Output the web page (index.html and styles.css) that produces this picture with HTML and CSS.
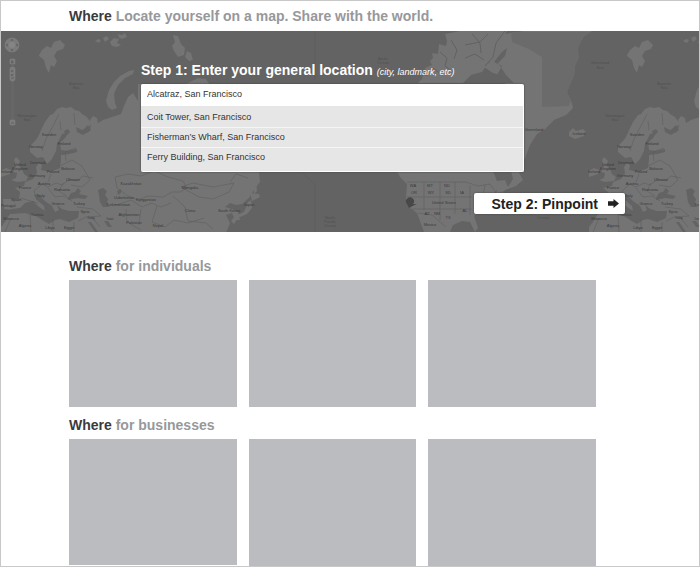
FILE: index.html
```html
<!DOCTYPE html>
<html lang="en">
<head>
<meta charset="utf-8">
<title>Where</title>
<meta name="viewport" content="width=device-width, initial-scale=1">
<link rel="stylesheet" href="styles.css">
</head>
<body>
<div class="page">
  <header class="masthead">
    <h1 class="title"><strong>Where</strong> Locate yourself on a map. Share with the world.</h1>
  </header>

  <section class="hero">
    <svg class="map" viewBox="1 31 698 201" preserveAspectRatio="xMidYMin slice" aria-hidden="true">
      <defs>
        <g id="old-world">
          <g class="land">
            <path d="M39 55l3-5 5-4 4 2 3-6 6-2 5 5-2 4-6 2-3 5 3 5-3 6-3-2-2 8-3-5-2-8-5-4zM95 41l3-2 3 1-2 3zM103 38l4-2 2 3-4 3zM110 42l4-4 5 1-2 4 4 2-4 2-5-1zM118 34l4 1 3-2 2 4-5 2-3-1zM173 35l5 1 3 8 4 4-1 7-6 2-4-6-2-5 3-4zM187 51l4 2 2 7-4 1-4-4z"/>
            <path d="M108 107l-2-6 3-11 5-8 6-6 9-5 5-1-1 4-8 4-7 7-4 9 1 9 2 5-5 2z"/>
            <path d="M30 152l0-6 5-5 3-4 4-9 3-6 5-7 3-1 4-5 5-2 4 1 5-1 4 3 4 1 3 3 5 3 4 6-1 3-8 4-6-3 1 5 6 3 6-4 2-5-1-6 3-4 4 2 1 5 5-3 9-3 9-3 3-8 4-9 5-4 5 8V84l48 0 12-6 8 1 4 6 50 6 5 81-6 0 1 10-6 8-5 8-7 6-6 1-6-2-5 4 7 2 6 3 2 8-5 0-3-7-6 2 4 8-4 10H1v-6l4-5 5-8 2-4-8-1-1-10 16 0 1-7-5-4 9-2 1-4 8-3 4-6-1-6 3-4 3 2-1 5 9 2 10-4 1-9 0-4 8-1 8-2 0-3-10 2-6-1-1-7 6-6 0-4-4 1-5 10-1 7-4 8-5 5-4-7-6 1z"/>
            <path d="M11 180l5-2 1-5-4-1 3-6-2-6 2-3 4 4-2 4 4 4 2 5 4 3-2 4-9 1zM1 171l5-3 5 2-1 4-9 3z"/>
            <path d="M254 172l2 0 0 10 1 9-3 3zM250 193l9 1 1 3-8 4zM251 200l1 8-5 6-9 4-4 6-3-3 4-5 9-4 4-10z"/>
          </g>
          <g class="water">
            <path d="M64 131l4-2 2 3-4 4zM84 129l4-4 3 5-4 3z"/>
            <path d="M68 198l3-5 4-1 3-4 3 3-2 3 9 2-3 3-8-1-9 2zM99 195l-1-5 5-2 4 3-2 4 3 4-1 4 2 4-6 0-3-5zM117 191l4-2v4l-3 2z"/>
            <path d="M12 209l8-1 5-5 8-2 6 6 6 4-1-5-7-6-3-5 4-1 7 7 7 5 3 6 4-2-2-5 5 4 7 2 10 0-1 7-9 4-9-3-5 1-6 4-7-4-6-4-11-3-14 1-9-1z"/>
            <path d="M88 222l3 0 7 10h-3zM104 221l4 0 4 6-4 0z"/>
          </g>
          <path class="edge" d="M37 200l-3-9 8-7 6 3 8-4 6 2 8-6 7 2 6-5 10 2M48 188l7 9 9-1 8 5M63 183l-4 8 8 5M51 174l-3 8M60 166l12-6 10 6 8 14-8 7-11-2M20 198l18 5M42 151l4-12 8-15 5-10M61 130l-1-9M75 125l-1-12M66 161l-1-9 11-4M117 188l-2-11 13-3 13 2 13-5 14 6 15 4 4 7-7 4-8 0-9 5-15-1-10 4-10-4zM116 205l15-5 11 7 10-4 9 4 10-4M126 209l1 13 14 8M141 209l-2 16M157 206l-5 16 13 5 9-7 14 3 16-5M181 187l12-4 20 4 21-4-5 9-16 7-14-2zM173 196l12 11 3 14 18 2 7 6M77 207l16 2 8 7-15 1-8 4M91 216l9 11M30 214l1 18M53 219v13M74 222v10M11 218l-6 14M230 182l6-8 12 4"/>
          <g class="label">
            <text x="49" y="136">Sweden</text><text x="36" y="148">Norway</text><text x="64" y="145">Finland</text>
            <text x="20" y="166">United</text><text x="20" y="170">Kingdom</text><text x="6" y="173">Ireland</text><text x="38" y="164">Denmark</text>
            <text x="37" y="177">Germany</text><text x="53" y="173">Poland</text><text x="68" y="170">Belarus</text><text x="73" y="181">Ukraine</text>
            <text x="44" y="185">Austria</text><text x="25" y="189">France</text><text x="62" y="191">Romania</text><text x="41" y="197">Italy</text>
            <text x="16" y="201">Spain</text><text x="8" y="207">Portugal</text><text x="58" y="205">Greece</text><text x="79" y="205">Turkey</text>
            <text x="11" y="220">Morocco</text><text x="37" y="216">Tunisia</text><text x="25" y="227">Algeria</text><text x="50" y="229">Libya</text><text x="69" y="229">Egypt</text>
            <text x="85" y="213">Syria</text><text x="91" y="219">Iraq</text><text x="110" y="220">Iran</text><text x="131" y="185">Kazakhstan</text>
            <text x="124" y="199">Uzbekistan</text><text x="146" y="201">Kyrgyzstan</text><text x="118" y="206">Turkmenistan</text>
            <text x="129" y="216">Afghanistan</text><text x="134" y="224">Pakistan</text><text x="158" y="227">Nepal</text><text x="190" y="189">Mongolia</text><text x="190" y="212">China</text>
            <text x="229" y="212">South Korea</text><text x="249" y="206">Japan</text>
          </g>
          <g class="label faint">
            <text x="76" y="85">Barents</text><text x="76" y="89">Sea</text><text x="27" y="117">Norwegian</text><text x="27" y="121">Sea</text>
          </g>
        </g>
      </defs>
      <rect class="ocean" x="1" y="31" width="698" height="201"/>
      <use href="#old-world"/>
      <g class="land">
        <path d="M524 31H592l-8 5-4 7-3 6 2 8-4 9-1 10-4 8-3 9 4 7 2 8-7 7-12 5-9 9-8 5-7 11-6 16-5-2-4-9-3-16 1-23-10-35-10-3-9-6 6-5-5-5 7-8 0-7 7-7z"/>
        <path d="M418 83l4-4 1-4 5 1-3-8 7-3-2-4 3-3-1-5 6 1 1-10 7 2 1-5-2-7 15-3h43l4 0-8 13-9 10-1 8-7 10-11 3-8 8z"/>
        <path d="M397 171H518L523 180L516 186L505 190L500 199L488 204L480 211L474 216L478 228L475 232L470 222L462 221L453 225L450 232H424L417 213L409 207L406 199L407 184L400 177z"/>
        <path d="M569 132l4-4 3 3 7-2 3 3-2 4-9 3-6-3z"/>
      </g>
      <path class="inner" d="M511 32h80l-9 6-4 11 1 8-4 9-1 10-4 8-3 9 4 7-2 6-27 1V57l-13-8-17-7z"/>
      <g class="water">
        <path d="M497 75l5-9-8-4 8-10 5-4-2 8-7 7 8 12 8 8h-20zM493 171l4 10 8-1 3 7 5-8-2-8z"/>
      </g>
      <path class="channel" d="M465 45l15-3 8-8M472 34l8 9 1 10M465 58l10-4 9 6M440 52l7 6-2 8 8 6M451 40l6 10-3 9M433 68l9 7M505 31l-9 12-3 14-8 9"/>
      <path class="edge" d="M407 182h59l12 4 12-2 7 10 14-5M424 183v27M440 182v38M455 182v32M470 185v30M407 197h65M412 209h60M485 185l-4 20M497 190l-9 15M315 31v49M300 171l15 13v48M418 213l14 2 14 12"/>
      <path class="marker" d="M409 208l-2-4a4 4 0 1 1 6 0l4 0c-4 1-5 3-8 4z"/>
      <use href="#old-world" x="588"/>
      <g class="label">
        <text x="444" y="204">United States</text><text x="430" y="226">Mexico</text><text x="534" y="131">Greenland</text><text x="579" y="135">Iceland</text>
        <text x="413" y="187">WA</text><text x="430" y="187">MT</text><text x="447" y="187">ND</text><text x="414" y="194">OR</text><text x="431" y="194">WY</text><text x="448" y="194">SD</text><text x="462" y="194">IA</text><text x="427" y="215">AZ</text><text x="437" y="215">NM</text><text x="448" y="219">TX</text><text x="465" y="212">AL</text>
      </g>
      <g class="label faint">
        <text x="330" y="219">North</text><text x="330" y="223">Pacific</text><text x="330" y="227">Ocean</text>
        <text x="383" y="60">Arctic</text><text x="383" y="64">Ocean</text><text x="543" y="219">Ocean</text>
        <text x="600" y="64">Greenland</text><text x="600" y="69">Sea</text>
      </g>
      <g class="controls">
        <circle cx="12" cy="45" r="7"/>
        <circle class="hub" cx="12" cy="45" r="3"/>
        <path class="glyph" d="M11 41l1-2 1 2M11 49l1 2 1-2M8 44l-2 1 2 1M16 44l2 1-2 1"/>
        <path class="track" d="M12 64v56M13 64v56"/>
        <rect x="10" y="59" width="5" height="5" rx="1"/><rect x="10" y="67" width="5" height="14" rx="2"/><rect x="10" y="120" width="5" height="5" rx="1"/>
        <path class="glyph" d="M11 62h3M12 60v4M11 72l1-2 1 2M11 74l1 2 1-2M11 78h3M11 123h3"/>
      </g>
    </svg>

    <form class="finder">
      <label class="step" for="place">Step 1: Enter your general location <em class="hint">(city, landmark, etc)</em></label>
      <div class="picker">
        <input class="field" id="place" type="text" value="Alcatraz, San Francisco">
        <ul class="options">
          <li class="option">Coit Tower, San Francisco</li>
          <li class="option">Fisherman’s Wharf, San Francisco</li>
          <li class="option">Ferry Building, San Francisco</li>
        </ul>
      </div>
      <button class="next" type="button">Step 2: Pinpoint
        <svg class="arrow" viewBox="0 0 10 8" aria-hidden="true"><path d="M0 2h5V0l5 4-5 4V6H0z"/></svg>
      </button>
    </form>
  </section>

  <main class="content">
    <section class="group">
      <h2 class="title"><strong>Where</strong> for individuals</h2>
      <div class="cards"><div class="card"></div><div class="card"></div><div class="card"></div></div>
    </section>
    <section class="group">
      <h2 class="title"><strong>Where</strong> for businesses</h2>
      <div class="cards"><div class="card"></div><div class="card"></div><div class="card"></div></div>
    </section>
  </main>
</div>
</body>
</html>
```
FILE: styles.css
```css
* {
  box-sizing: border-box;
}

body {
  margin: 0;
  background: #fff;
  color: #333;
  font-family: "Liberation Sans", Arial, sans-serif;
}

.page {
  min-height: 100vh;
  border: 1px solid #c8c8c8;
}

.masthead {
  padding: 5px 68px;
}

.title {
  margin: 0;
  color: #97989b;
  font-size: 14px;
  line-height: 20px;
  font-weight: bold;
}

.title strong {
  color: #3a3a3c;
}

.hero {
  position: relative;
  padding: 29px 74px 18px 140px;
  background: #636363;
}

.map {
  position: absolute;
  inset: 0;
  width: 100%;
  height: 100%;
}

.ocean { fill: #636363; }
.land { fill: #747474; }
.inner { fill: #6b6b6b; }
.water { fill: #636363; }
.channel { fill: none; stroke: #626262; stroke-width: 1; }
.edge { fill: none; stroke: #5b5b5b; stroke-width: 0.5; }
.marker { fill: #484848; }
.label { fill: #3a3a3a; font-size: 4px; text-anchor: middle; }
.faint { fill: #505050; }
.controls { fill: #7b7b7b; stroke: #858585; stroke-width: 0.5; }
.controls .glyph { fill: none; stroke: #4c4c4c; }
.controls .track { fill: none; stroke: #707070; }
.controls .hub { fill: #858585; }

.finder {
  position: relative;
  display: flex;
  flex-direction: column;
}

.step {
  color: #fff;
  font-size: 14px;
  line-height: 20px;
  font-weight: bold;
  margin-bottom: 2px;
}

.hint {
  font-size: 9px;
  font-weight: normal;
}

.picker {
  margin-right: 101px;
  border-radius: 2px;
  border-right: 1px solid #fff;
  border-bottom: 1px solid #fff;
  background: #e6e6e6;
  box-shadow: 0 0 2px #3c3c3c;
}

.field {
  display: block;
  width: 100%;
  height: 22px;
  padding: 0 6px 2px;
  border: 0;
  border-radius: 2px 2px 0 0;
  outline: 0;
  background: #fff;
  color: #333;
  font: 9px/20px "Liberation Sans", Arial, sans-serif;
}

.options {
  margin: 0;
  padding: 2px 0 4px;
  list-style: none;
}

.option {
  padding: 0 6px;
  font-size: 9px;
  line-height: 19px;
}

.option + .option {
  border-top: 1px solid #f6f6f6;
}

.next {
  display: flex;
  align-items: center;
  gap: 10px;
  align-self: flex-end;
  height: 21px;
  margin-top: 21px;
  padding: 0 6px 0 17px;
  border: 0;
  border-radius: 2px;
  background: #fff;
  box-shadow: 0 0 2px #3c3c3c;
  color: #222;
  font: bold 14px/20px "Liberation Sans", Arial, sans-serif;
}

.arrow {
  width: 11px;
  height: 9px;
  fill: #222;
}

.content {
  padding: 24px 103px 0 68px;
}

.group + .group {
  margin-top: 8px;
}

.cards {
  display: grid;
  grid-template-columns: repeat(3, 1fr);
  gap: 12px;
  margin-top: 4px;
}

.card {
  aspect-ratio: 168 / 127;
  background: #bbbcc0;
}
```
